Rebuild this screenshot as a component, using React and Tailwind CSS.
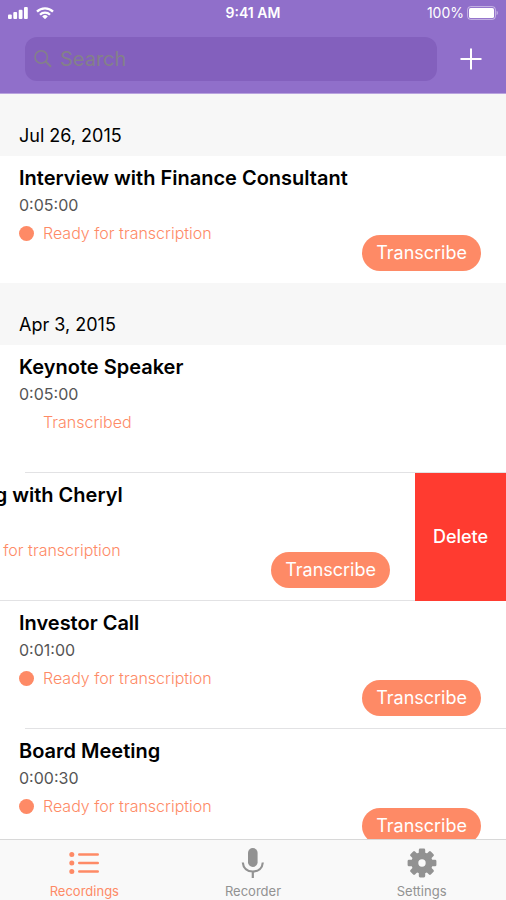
import React, { useState } from "react";

const sections = [
  {
    date: "Jul 26, 2015",
    recordings: [
      { title: "Interview with Finance Consultant", duration: "0:05:00" },
    ],
  },
  {
    date: "Apr 3, 2015",
    recordings: [
      { title: "Keynote Speaker", duration: "0:05:00", transcribed: true },
      { title: "Meeting with Cheryl", duration: "0:05:00", swiped: true },
      { title: "Investor Call", duration: "0:01:00" },
      { title: "Board Meeting", duration: "0:00:30" },
    ],
  },
];

const SignalIcon = () => (
  <svg className="h-3 w-5" viewBox="0 0 20 12" fill="currentColor">
    <rect x="0" y="7.5" width="3.8" height="4.5" rx="1" />
    <rect x="5.3" y="5" width="3.8" height="7" rx="1" />
    <rect x="10.7" y="2.8" width="3.8" height="9.2" rx="1" />
    <rect x="16" y="0" width="3.8" height="12" rx="1" />
  </svg>
);

const WifiIcon = () => (
  <svg className="h-3 w-[18px]" viewBox="0 0 18 12" fill="none">
    <g stroke="currentColor" strokeWidth="2.3">
      <path d="M1 4.6a11.3 11.3 0 0 1 16 0" />
      <path d="M4 7.7a7 7 0 0 1 10 0" />
    </g>
    <path d="M9 12.2 6.2 9.4a4 4 0 0 1 5.6 0z" fill="currentColor" />
  </svg>
);

const BatteryIcon = () => (
  <svg className="h-[14px] w-[31px]" viewBox="0 0 31 14" fill="none">
    <rect
      x="0.6"
      y="0.6"
      width="27.8"
      height="12.8"
      rx="3"
      stroke="currentColor"
      strokeOpacity="0.5"
    />
    <rect x="2" y="2" width="25" height="10" rx="1.6" fill="currentColor" />
    <path d="M29.6 4.8c1.6.6 1.6 3.8 0 4.4z" fill="currentColor" opacity="0.5" />
  </svg>
);

const SearchIcon = () => (
  <svg
    className="h-[18px] w-[18px] text-[#848089]"
    viewBox="0 0 18 18"
    fill="none"
    stroke="currentColor"
  >
    <circle cx="7.2" cy="7" r="6.2" strokeWidth="1.5" />
    <path d="m11.6 11.4 5.4 5.4" strokeWidth="2" />
  </svg>
);

const PlusIcon = () => (
  <svg className="h-[22px] w-[22px]" viewBox="0 0 22 22" stroke="currentColor">
    <path d="M11 0.5v21M0.5 11h21" strokeWidth="2" />
  </svg>
);

const ListIcon = () => (
  <svg className="h-8 w-8" viewBox="0 0 32 32" fill="currentColor">
    <circle cx="3.8" cy="7.5" r="2.5" />
    <circle cx="3.8" cy="16" r="2.5" />
    <circle cx="3.8" cy="24.5" r="2.5" />
    <rect x="10" y="6.2" width="21" height="2.6" rx="1.3" />
    <rect x="10" y="14.7" width="21" height="2.6" rx="1.3" />
    <rect x="10" y="23.2" width="21" height="2.6" rx="1.3" />
  </svg>
);

const MicIcon = () => (
  <svg className="h-8 w-8" viewBox="0 0 32 32" fill="none">
    <rect x="11" y="1" width="9.6" height="19" rx="4.8" fill="currentColor" />
    <path
      d="M5.8 15.5c.4 5.6 4.4 9 10 9s9.600-3.400 10-9M15.800 24.500V31"
      stroke="currentColor"
      strokeWidth="2.2"
    />
  </svg>
);

const GearIcon = () => (
  <svg className="h-8 w-8" viewBox="0 0 32 32" fill="none">
    <circle cx="16" cy="16" r="7.2" stroke="currentColor" strokeWidth="7" />
    <g fill="currentColor">
      {[0, 45, 90, 135].map((angle) => (
        <g key={angle} transform={`rotate(${angle} 16 16)`}>
          <rect x="12.8" y="1.6" width="6.4" height="7.4" rx="1.3" />
          <rect x="12.8" y="23" width="6.4" height="7.4" rx="1.3" />
        </g>
      ))}
    </g>
  </svg>
);

const tabs = [
  { label: "Recordings", icon: ListIcon },
  { label: "Recorder", icon: MicIcon },
  { label: "Settings", icon: GearIcon },
];

const Header = () => (
  <header className="bg-[#906fca] text-white border-b border-[#b9a3df]">
    <div className="grid grid-cols-3 items-center h-[26px] px-2 text-sm">
      <div className="flex items-center gap-2">
        <SignalIcon />
        <WifiIcon />
      </div>
      <span className="text-center font-semibold">9:41 AM</span>
      <div className="flex items-center justify-end gap-[3px]">
        <span>100%</span>
        <BatteryIcon />
      </div>
    </div>
    <div className="flex items-center pt-[11px] pb-3 pl-[25px] pr-6">
      <label className="flex flex-1 items-center gap-2 h-11 px-[9px] rounded-xl bg-[#8360bd]">
        <SearchIcon />
        <input
          type="text"
          placeholder="Search"
          aria-label="Search"
          className="flex-1 min-w-0 bg-transparent text-xl outline-none placeholder:text-[#848089]"
        />
      </label>
      <button aria-label="Add recording" className="ml-[23px]">
        <PlusIcon />
      </button>
    </div>
  </header>
);

const Recording = ({ item }) => (
  <li className="group flex justify-end overflow-hidden">
    <div className="w-full shrink-0">
      <div className="flex justify-between h-[127px] pl-[19px] pr-[25px] pt-2 pb-3">
        <div>
          <h3 className="text-xl leading-7 font-semibold text-black">
            {item.title}
          </h3>
          <p className="mt-[3px] text-base leading-5 text-[#555555]">
            {item.duration}
          </p>
          <p className="mt-2 flex items-center gap-[9px] text-base leading-5 font-light text-[#fe8a66]">
            <span
              className={`h-[15px] w-[15px] rounded-full ${
                item.transcribed ? "" : "bg-[#fe8a66]"
              }`}
            />
            {item.transcribed ? "Transcribed" : "Ready for transcription"}
          </p>
        </div>
        {!item.transcribed && (
          <button className="self-end shrink-0 h-9 px-[14px] rounded-full bg-[#fe8a66] text-lg text-white">
            Transcribe
          </button>
        )}
      </div>
      <div
        className={`h-px bg-[#e2e2e4] group-last:hidden ${
          item.swiped ? "" : "ml-[25px]"
        }`}
      />
    </div>
    {item.swiped && (
      <button className="shrink-0 w-[91px] bg-[#ff3b30] text-lg font-medium text-white">
        Delete
      </button>
    )}
  </li>
);

const App = () => {
  const [activeTab, setActiveTab] = useState("Recordings");

  return (
    <div className="flex flex-col h-screen overflow-hidden bg-white font-['Inter',sans-serif]">
      <Header />
      <main className="flex-1 min-h-0 overflow-hidden">
        {sections.map((section) => (
          <section key={section.date}>
            <h2 className="flex items-end h-[62px] px-[19px] pb-2 bg-[#f7f7f7] text-lg leading-6 text-black">
              {section.date}
            </h2>
            <ul>
              {section.recordings.map((item) => (
                <Recording key={item.title} item={item} />
              ))}
            </ul>
          </section>
        ))}
      </main>
      <nav className="grid grid-cols-3 h-[61px] border-t border-[#d8d8d8] bg-[#f9f9f9]">
        {tabs.map((tab) => (
          <button
            key={tab.label}
            onClick={() => setActiveTab(tab.label)}
            className={`flex flex-col items-center gap-1 pt-[7px] text-[13px] leading-4 ${
              activeTab === tab.label ? "text-[#fe8a66]" : "text-[#929292]"
            }`}
          >
            <tab.icon />
            {tab.label}
          </button>
        ))}
      </nav>
    </div>
  );
};

export default App;
